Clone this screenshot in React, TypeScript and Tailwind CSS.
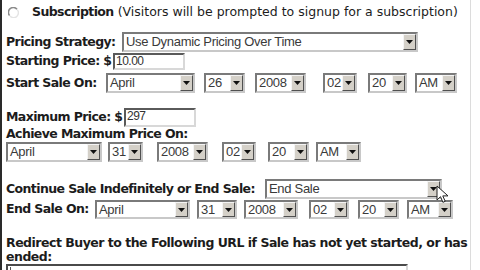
import React from "react";

type Opt = { value: string; w: string; ml?: string };

function Select({ value, w, ml = "" }: Opt) {
  return (
    <div
      className={`flex h-full ${w} ${ml} shrink-0 border-2 border-t-[#7a7a7a] border-l-[#7a7a7a] border-b-[#c8c8c8] border-r-[#c8c8c8] bg-white`}
    >
      <span className="flex-1 overflow-hidden whitespace-nowrap pl-[2px] text-[13px] leading-[16px] tracking-[-0.3px] text-[#3a3a3a] font-['Liberation_Sans',Arial,sans-serif]">
        {value}
      </span>
      <span className="flex w-[13px] shrink-0 items-center justify-center border border-t-[#f4f4f4] border-l-[#f4f4f4] border-b-[#505050] border-r-[#505050] bg-[#d4d0c8]">
        <svg width="7" height="4" viewBox="0 0 7 4">
          <path d="M0 0h7L3.5 4z" fill="#111" />
        </svg>
      </span>
    </div>
  );
}

function TextBox({ value, w, h }: { value: string; w: string; h: string }) {
  return (
    <div
      className={`${w} ${h} shrink-0 border-2 border-t-[#5a5a5a] border-l-[#5a5a5a] border-b-[#d8d8d8] border-r-[#d8d8d8] bg-white pl-[1px] text-[12px] leading-[13px] tracking-[-0.5px] text-[#333] font-['Liberation_Sans',Arial,sans-serif]`}
    >
      {value}
    </div>
  );
}

function Label({ children, w = "" }: { children: React.ReactNode; w?: string }) {
  return <span className={`${w} shrink-0 whitespace-nowrap font-bold tracking-[-0.6px]`}>{children}</span>;
}

export default function App() {
  return (
    <div className="relative h-[270px] w-[471px] overflow-hidden border-l-2 border-r border-l-[#2a2a2a] border-r-[#dcdcdc] bg-white pl-[4px] text-[12.5px] text-[#1c1c1c] font-['DejaVu_Sans',Verdana,sans-serif]">
      <div className="mt-[2px] flex h-[20px] items-center">
        <svg className="ml-[2px]" width="11" height="11" viewBox="0 0 11 11">
          <path d="M9 2.2A4.5 4.5 0 0 0 1.6 8.6" fill="none" stroke="#8a8a8a" strokeWidth="1.6" />
          <path d="M2 9a4.5 4.5 0 0 0 7.2-6.4" fill="none" stroke="#e4e4e4" strokeWidth="1.4" />
        </svg>
        <span className="ml-[13px] whitespace-nowrap">
          <span className="font-bold tracking-[-0.6px]">Subscription</span> (Visitors will be prompted to signup for a subscription)
        </span>
      </div>

      <div className="mt-[10px] flex h-[20px] items-center">
        <Label w="w-[116px]">Pricing Strategy:</Label>
        <Select value="Use Dynamic Pricing Over Time" w="w-[296px]" />
      </div>

      <div className="mt-[1px] flex h-[17px] items-center">
        <Label w="w-[107px]">Starting Price: $</Label>
        <TextBox value="10.00" w="w-[72px]" h="h-[17px]" />
      </div>

      <div className="mt-[3px] flex h-[20px] items-center">
        <Label w="w-[100px]">Start Sale On:</Label>
        <Select value="April" w="w-[89px]" />
        <Select value="26" w="w-[41px]" ml="ml-[9px]" />
        <Select value="2008" w="w-[51px]" ml="ml-[10px]" />
        <Select value="02" w="w-[34px]" ml="ml-[17px]" />
        <Select value="20" w="w-[39px]" ml="ml-[11px]" />
        <Select value="AM" w="w-[42px]" ml="ml-[8px]" />
      </div>

      <div className="mt-[15px] flex h-[19px] items-center">
        <Label w="w-[118px]">Maximum Price: $</Label>
        <TextBox value="297" w="w-[72px]" h="h-[19px]" />
      </div>

      <div className="flex h-[14px] items-center">
        <Label>Achieve Maximum Price On:</Label>
      </div>

      <div className="mt-[1px] flex h-[20px] items-center">
        <Select value="April" w="w-[96px]" />
        <Select value="31" w="w-[35px]" ml="ml-[6px]" />
        <Select value="2008" w="w-[51px]" ml="ml-[14px]" />
        <Select value="02" w="w-[34px]" ml="ml-[14px]" />
        <Select value="20" w="w-[41px]" ml="ml-[12px]" />
        <Select value="AM" w="w-[45px]" ml="ml-[7px]" />
      </div>

      <div className="mt-[17px] flex h-[20px] items-center">
        <Label w="w-[259px]">Continue Sale Indefinitely or End Sale:</Label>
        <Select value="End Sale" w="w-[177px]" />
      </div>

      <div className="mt-[1px] flex h-[19px] items-center">
        <Label w="w-[89px]">End Sale On:</Label>
        <Select value="April" w="w-[95px]" />
        <Select value="31" w="w-[40px]" ml="ml-[7px]" />
        <Select value="2008" w="w-[54px]" ml="ml-[7px]" />
        <Select value="02" w="w-[40px]" ml="ml-[11px]" />
        <Select value="20" w="w-[41px]" ml="ml-[9px]" />
        <Select value="AM" w="w-[46px]" ml="ml-[8px]" />
      </div>

      <p className="mt-[17px] whitespace-nowrap font-bold leading-[14px] tracking-[-0.5px]">
        Redirect Buyer to the Following URL if Sale has not yet started, or has
        <br />
        ended:
      </p>

      <div className="h-[20px] w-[402px] border-2 border-t-[#4a4a4a] border-l-[#4a4a4a] border-b-[#d8d8d8] border-r-[#d8d8d8] bg-white">
        <div className="ml-[2px] mt-[1px] h-[4px] w-[1px] bg-[#555]" />
      </div>

      <svg className="absolute left-[434px] top-[185px]" width="13" height="19" viewBox="0 0 13 19">
        <path d="M1 1v14l3.5-3.3 2.4 5.6 2.3-1-2.4-5.4H12z" fill="#fff" stroke="#222" strokeWidth="1" strokeLinejoin="round" />
      </svg>
    </div>
  );
}
